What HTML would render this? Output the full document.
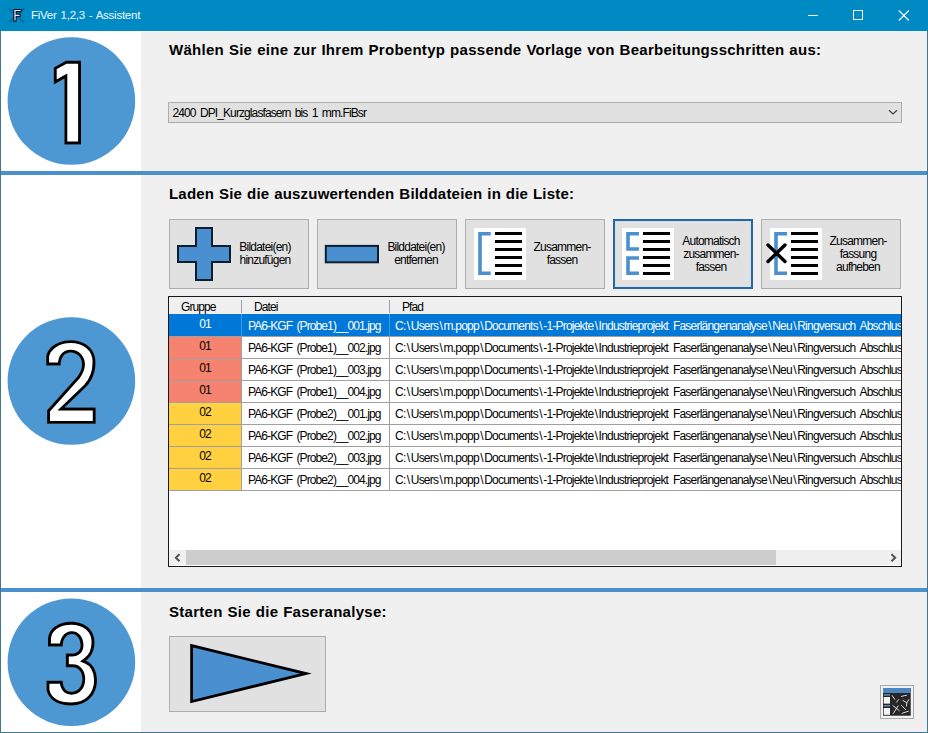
<!DOCTYPE html>
<html><head><meta charset="utf-8">
<style>
*{margin:0;padding:0;box-sizing:border-box}
html,body{width:928px;height:733px;overflow:hidden;background:#f0f0f0;font-family:"Liberation Sans",sans-serif;position:relative}
.a{position:absolute}
.t12{font-size:12px;line-height:13px;letter-spacing:-0.9px;word-spacing:1.9px;white-space:nowrap;color:#000}
.h15{font-size:15px;line-height:17px;font-weight:bold;letter-spacing:0.27px;word-spacing:0.5px;white-space:nowrap;color:#000}
.btn{position:absolute;top:219px;width:140px;height:70px;background:#e1e1e1;border:1px solid #adadad}
.lbl{position:absolute;text-align:center;font-size:12px;line-height:13px;letter-spacing:-0.78px;white-space:nowrap;color:#000}
.row{position:absolute;left:169px;width:732px;height:21px;background:#fff}
.gl{position:absolute;left:169px;width:732px;height:1px;background:#a0a0a0}
.c{position:absolute;top:0;font-size:12px;line-height:13px;letter-spacing:-0.9px;word-spacing:1.9px;white-space:nowrap;overflow:hidden}
.p{letter-spacing:-0.78px;word-spacing:2.18px}
.p i{font-style:normal;padding:0 1.39px}
</style></head><body>
<!-- title bar -->
<div class="a" style="left:0;top:0;width:928px;height:31px;background:#008ac4"></div>
<svg class="a" style="left:7px;top:6px" width="18" height="19" viewBox="0 0 18 19">
  <path d="M2 2.5 L17 16.5 M17 2.5 L2 16.5" stroke="#0a4a7a" stroke-opacity="0.45" stroke-width="2.2"/>
  <path d="M6.8 3.5 L14.3 3.5 L14.3 5.6 L9.2 5.6 L9.2 8.1 L13.1 8.1 L13.1 10.5 L9.2 10.5 L9.2 15.1 L6.8 15.1 Z" fill="#e6eef8" stroke="#0b1636" stroke-width="1.2"/>
</svg>
<div class="a" style="left:31px;top:9px;font-size:11.5px;line-height:13px;letter-spacing:-0.25px;word-spacing:1px;color:#eef8ff;white-space:nowrap">FiVer 1,2,3 - Assistent</div>
<div class="a" style="left:808px;top:15px;width:10px;height:1px;background:#fff"></div>
<div class="a" style="left:853px;top:10px;width:10px;height:10px;border:1px solid #fff"></div>
<svg class="a" style="left:898px;top:10px" width="12" height="11" viewBox="0 0 12 11"><path d="M0.8 0.5 L10.8 10.5 M10.8 0.5 L0.8 10.5" stroke="#fff" stroke-width="1.1"/></svg>

<!-- window borders -->
<div class="a" style="left:0;top:31px;width:1px;height:702px;background:#417890"></div>
<div class="a" style="left:927px;top:31px;width:1px;height:702px;background:#417890"></div>
<div class="a" style="left:0;top:732px;width:928px;height:1px;background:#417890"></div>

<!-- white left panels -->
<div class="a" style="left:1px;top:31px;width:140px;height:140px;background:#fff"></div>
<div class="a" style="left:1px;top:175px;width:140px;height:413px;background:#fff"></div>
<div class="a" style="left:1px;top:592px;width:140px;height:140px;background:#fff"></div>
<!-- separators -->
<div class="a" style="left:1px;top:171px;width:926px;height:4px;background:#4a90cc"></div>
<div class="a" style="left:1px;top:588px;width:926px;height:4px;background:#4a90cc"></div>

<!-- circles -->
<svg class="a" style="left:0;top:31px" width="141" height="701" viewBox="0 31 141 701">
  <defs><clipPath id="d1"><path d="M53.8 67.5 L66 60.8 L81 60.8 L81 144.4 L64.4 144.4 L64.4 78.5 L53.8 84.5 Z"/></clipPath><clipPath id="d2"><path d="M47.1 423.8 L95.7 423.8 L95.7 407.6 L64.6 407.6 L86.5 386.5 C92.5 380 95.5 372 95.5 362 C95.5 348 84 340.2 70.5 340.2 C58 340.2 48 347 46.2 356 L46.2 365.5 L60.7 365.5 C60.7 358 64 352.6 70.5 352.6 C77 352.6 82 357.5 82 364.5 C82 369 80 373 77 377 L47.1 410.2 Z"/></clipPath><clipPath id="d3"><path d="M48 646.5 L62.7 646.5 C62.7 639 66.5 634.1 71.7 634.1 C77 634.1 80.5 639 80.5 645.5 C80.5 650.5 77 653.6 72 653.6 L65.9 653.6 L65.9 667.2 L72.5 667.2 C78.5 667.2 82.3 672 82.3 679 C82.3 686.5 78 691.8 71.5 691.8 C65.5 691.8 62.7 687 62.7 680.8 L46.5 680.8 L46.5 690 C48.5 700 58 705.4 71.5 705.4 C87 705.4 97 695 97 680 C97 670 92 663 86 660.7 C91 657 94.5 651 94.5 642 C94.5 630 85 621.8 71.1 621.8 C58 621.8 49 629 48 638 Z"/></clipPath></defs>
  <circle cx="71.4" cy="101" r="63.8" fill="#4d97d2"/>
  <circle cx="71.4" cy="381" r="63.8" fill="#4d97d2"/>
  <circle cx="71.4" cy="662.2" r="63.8" fill="#4d97d2"/>
  <path d="M53.8 67.5 L66 60.8 L81 60.8 L81 144.4 L64.4 144.4 L64.4 78.5 L53.8 84.5 Z" fill="#fff" stroke="#000" stroke-width="5.8" clip-path="url(#d1)"/>
  <path d="M47.1 423.8 L95.7 423.8 L95.7 407.6 L64.6 407.6 L86.5 386.5 C92.5 380 95.5 372 95.5 362 C95.5 348 84 340.2 70.5 340.2 C58 340.2 48 347 46.2 356 L46.2 365.5 L60.7 365.5 C60.7 358 64 352.6 70.5 352.6 C77 352.6 82 357.5 82 364.5 C82 369 80 373 77 377 L47.1 410.2 Z" fill="#fff" stroke="#000" stroke-width="5.8" clip-path="url(#d2)"/>
  <path d="M48 646.5 L62.7 646.5 C62.7 639 66.5 634.1 71.7 634.1 C77 634.1 80.5 639 80.5 645.5 C80.5 650.5 77 653.6 72 653.6 L65.9 653.6 L65.9 667.2 L72.5 667.2 C78.5 667.2 82.3 672 82.3 679 C82.3 686.5 78 691.8 71.5 691.8 C65.5 691.8 62.7 687 62.7 680.8 L46.5 680.8 L46.5 690 C48.5 700 58 705.4 71.5 705.4 C87 705.4 97 695 97 680 C97 670 92 663 86 660.7 C91 657 94.5 651 94.5 642 C94.5 630 85 621.8 71.1 621.8 C58 621.8 49 629 48 638 Z" fill="#fff" stroke="#000" stroke-width="5.8" clip-path="url(#d3)"/>
</svg>

<!-- section 1 -->
<div class="a h15" style="left:169px;top:41px">Wählen Sie eine zur Ihrem Probentyp passende Vorlage von Bearbeitungsschritten aus:</div>
<div class="a" style="left:168px;top:102px;width:734px;height:21px;background:#e1e1e1;border:1px solid #adadad"></div>
<div class="a t12" style="left:172.5px;top:107px">2400 DPI_Kurzglasfasern bis 1 mm.FiBsr</div>
<svg class="a" style="left:887.5px;top:109px" width="10" height="7" viewBox="0 0 10 7"><path d="M1 1.2 L5 5 L9 1.2" stroke="#404040" stroke-width="1.2" fill="none"/></svg>

<!-- section 2 -->
<div class="a h15" style="left:169px;top:185px;letter-spacing:0.2px">Laden Sie die auszuwertenden Bilddateien in die Liste:</div>

<div class="btn" style="left:169px"></div>
<div class="btn" style="left:317px"></div>
<div class="btn" style="left:465px"></div>
<div class="btn" style="left:613px;border:2px solid #2a669a;box-shadow:inset 0 0 0 1px #c8e2f6"></div>
<div class="btn" style="left:761px"></div>
<svg class="a" style="left:0;top:200px" width="928" height="100" viewBox="0 200 928 100">
  <!-- plus -->
  <path d="M196 228 L212 228 L212 246 L230 246 L230 262 L212 262 L212 280 L196 280 L196 262 L178 262 L178 246 L196 246 Z" fill="#4a90d0" stroke="#0f1e2e" stroke-width="2"/>
  <!-- minus -->
  <rect x="325.8" y="245.9" width="52.2" height="16.4" fill="#4a90d0" stroke="#0f1e2e" stroke-width="2"/>
  <!-- icon 3 -->
  <rect x="474" y="228" width="52" height="52" fill="#fff"/>
  <path d="M490.7 233.8 L480 233.8 L480 273.2 L490.7 273.2" fill="none" stroke="#4a8fcf" stroke-width="3.6"/>
  <g fill="#000"><rect x="495" y="232" width="27" height="3"/><rect x="495" y="240" width="27" height="3"/><rect x="495" y="248" width="27" height="3"/><rect x="495" y="256" width="27" height="3"/><rect x="495" y="264" width="27" height="3"/><rect x="495" y="272" width="27" height="3"/></g>
  <!-- icon 4 -->
  <rect x="622" y="228" width="52" height="52" fill="#fff"/>
  <path d="M639 233.8 L628 233.8 L628 249 L639 249 M639 258 L628 258 L628 273.2 L639 273.2" fill="none" stroke="#4a8fcf" stroke-width="3.6"/>
  <g fill="#000"><rect x="643" y="232" width="27" height="3"/><rect x="643" y="240" width="27" height="3"/><rect x="643" y="248" width="27" height="3"/><rect x="643" y="256" width="27" height="3"/><rect x="643" y="264" width="27" height="3"/><rect x="643" y="272" width="27" height="3"/></g>
  <!-- icon 5 -->
  <rect x="770" y="228" width="52" height="52" fill="#fff"/>
  <path d="M787 233.8 L776 233.8 L776 273.2 L787 273.2" fill="none" stroke="#4a8fcf" stroke-width="3.6"/>
  <g fill="#000"><rect x="791" y="232" width="27" height="3"/><rect x="791" y="240" width="27" height="3"/><rect x="791" y="248" width="27" height="3"/><rect x="791" y="256" width="27" height="3"/><rect x="791" y="264" width="27" height="3"/><rect x="791" y="272" width="27" height="3"/></g>
  <path d="M768 245 L785 261.5 M785 245 L768 261.5" stroke="#000" stroke-width="3.4" stroke-linecap="round"/>
</svg>
<div class="lbl" style="left:215px;top:241px;width:100px">Bildatei(en)<br>hinzufügen</div>
<div class="lbl" style="left:366px;top:241px;width:100px">Bilddatei(en)<br>entfernen</div>
<div class="lbl" style="left:512px;top:241px;width:100px">Zusammen-<br>fassen</div>
<div class="lbl" style="left:661px;top:235px;width:100px">Automatisch<br>zusammen-<br>fassen</div>
<div class="lbl" style="left:808px;top:235px;width:100px">Zusammen-<br>fassung<br>aufheben</div>

<!-- table -->
<div class="a" style="left:168px;top:296px;width:734px;height:271px;background:#fff;border:1px solid #1a1a1a"></div>
<div class="a" style="left:169px;top:297px;width:732px;height:17px;background:#f0f0f0"></div>
<div class="a" style="left:241px;top:300px;width:1px;height:13px;background:#a0a0a0"></div>
<div class="a" style="left:389px;top:300px;width:1px;height:13px;background:#a0a0a0"></div>
<div class="a t12" style="left:181px;top:301px">Gruppe</div>
<div class="a t12" style="left:254px;top:301px">Datei</div>
<div class="a t12" style="left:402px;top:301px">Pfad</div>
<!--ROWS-->
<div class="row" style="top:314px;height:22px;background:#0078d7"><div class="a" style="left:0;top:0;width:72px;height:22px;background:#0078d7"></div><div class="c" style="left:0;width:72px;top:4px;text-align:center;color:#fff">01</div><div class="c" style="left:79px;width:140px;top:6px;color:#fff">PA6-KGF (Probe1)__001.jpg</div><div class="c p" style="left:226px;width:506px;top:6px;color:#fff;overflow:hidden">C:<i>\</i>Users<i>\</i>m.popp<i>\</i>Documents<i>\</i>-1-Projekte<i>\</i>Industrieprojekt Faserlängenanalyse<i>\</i>Neu<i>\</i>Ringversuch Abschluss<i>\</i>Bilder</div></div>
<div class="gl" style="top:336px"></div>
<div class="a" style="left:241px;top:314px;width:1px;height:22px;background:#3d9ae6"></div>
<div class="a" style="left:389px;top:314px;width:1px;height:22px;background:#3d9ae6"></div>
<div class="row" style="top:337px;height:21px;background:#fff"><div class="a" style="left:0;top:0;width:72px;height:21px;background:#f6836f"></div><div class="c" style="left:0;width:72px;top:3px;text-align:center;color:#000">01</div><div class="c" style="left:79px;width:140px;top:5px;color:#000">PA6-KGF (Probe1)__002.jpg</div><div class="c p" style="left:226px;width:506px;top:5px;color:#000;overflow:hidden">C:<i>\</i>Users<i>\</i>m.popp<i>\</i>Documents<i>\</i>-1-Projekte<i>\</i>Industrieprojekt Faserlängenanalyse<i>\</i>Neu<i>\</i>Ringversuch Abschluss<i>\</i>Bilder</div></div>
<div class="gl" style="top:358px"></div>
<div class="a" style="left:241px;top:337px;width:1px;height:21px;background:#a0a0a0"></div>
<div class="a" style="left:389px;top:337px;width:1px;height:21px;background:#a0a0a0"></div>
<div class="row" style="top:359px;height:21px;background:#fff"><div class="a" style="left:0;top:0;width:72px;height:21px;background:#f6836f"></div><div class="c" style="left:0;width:72px;top:3px;text-align:center;color:#000">01</div><div class="c" style="left:79px;width:140px;top:5px;color:#000">PA6-KGF (Probe1)__003.jpg</div><div class="c p" style="left:226px;width:506px;top:5px;color:#000;overflow:hidden">C:<i>\</i>Users<i>\</i>m.popp<i>\</i>Documents<i>\</i>-1-Projekte<i>\</i>Industrieprojekt Faserlängenanalyse<i>\</i>Neu<i>\</i>Ringversuch Abschluss<i>\</i>Bilder</div></div>
<div class="gl" style="top:380px"></div>
<div class="a" style="left:241px;top:359px;width:1px;height:21px;background:#a0a0a0"></div>
<div class="a" style="left:389px;top:359px;width:1px;height:21px;background:#a0a0a0"></div>
<div class="row" style="top:381px;height:21px;background:#fff"><div class="a" style="left:0;top:0;width:72px;height:21px;background:#f6836f"></div><div class="c" style="left:0;width:72px;top:3px;text-align:center;color:#000">01</div><div class="c" style="left:79px;width:140px;top:5px;color:#000">PA6-KGF (Probe1)__004.jpg</div><div class="c p" style="left:226px;width:506px;top:5px;color:#000;overflow:hidden">C:<i>\</i>Users<i>\</i>m.popp<i>\</i>Documents<i>\</i>-1-Projekte<i>\</i>Industrieprojekt Faserlängenanalyse<i>\</i>Neu<i>\</i>Ringversuch Abschluss<i>\</i>Bilder</div></div>
<div class="gl" style="top:402px"></div>
<div class="a" style="left:241px;top:381px;width:1px;height:21px;background:#a0a0a0"></div>
<div class="a" style="left:389px;top:381px;width:1px;height:21px;background:#a0a0a0"></div>
<div class="row" style="top:403px;height:21px;background:#fff"><div class="a" style="left:0;top:0;width:72px;height:21px;background:#ffd040"></div><div class="c" style="left:0;width:72px;top:3px;text-align:center;color:#000">02</div><div class="c" style="left:79px;width:140px;top:5px;color:#000">PA6-KGF (Probe2)__001.jpg</div><div class="c p" style="left:226px;width:506px;top:5px;color:#000;overflow:hidden">C:<i>\</i>Users<i>\</i>m.popp<i>\</i>Documents<i>\</i>-1-Projekte<i>\</i>Industrieprojekt Faserlängenanalyse<i>\</i>Neu<i>\</i>Ringversuch Abschluss<i>\</i>Bilder</div></div>
<div class="gl" style="top:424px"></div>
<div class="a" style="left:241px;top:403px;width:1px;height:21px;background:#a0a0a0"></div>
<div class="a" style="left:389px;top:403px;width:1px;height:21px;background:#a0a0a0"></div>
<div class="row" style="top:425px;height:21px;background:#fff"><div class="a" style="left:0;top:0;width:72px;height:21px;background:#ffd040"></div><div class="c" style="left:0;width:72px;top:3px;text-align:center;color:#000">02</div><div class="c" style="left:79px;width:140px;top:5px;color:#000">PA6-KGF (Probe2)__002.jpg</div><div class="c p" style="left:226px;width:506px;top:5px;color:#000;overflow:hidden">C:<i>\</i>Users<i>\</i>m.popp<i>\</i>Documents<i>\</i>-1-Projekte<i>\</i>Industrieprojekt Faserlängenanalyse<i>\</i>Neu<i>\</i>Ringversuch Abschluss<i>\</i>Bilder</div></div>
<div class="gl" style="top:446px"></div>
<div class="a" style="left:241px;top:425px;width:1px;height:21px;background:#a0a0a0"></div>
<div class="a" style="left:389px;top:425px;width:1px;height:21px;background:#a0a0a0"></div>
<div class="row" style="top:447px;height:21px;background:#fff"><div class="a" style="left:0;top:0;width:72px;height:21px;background:#ffd040"></div><div class="c" style="left:0;width:72px;top:3px;text-align:center;color:#000">02</div><div class="c" style="left:79px;width:140px;top:5px;color:#000">PA6-KGF (Probe2)__003.jpg</div><div class="c p" style="left:226px;width:506px;top:5px;color:#000;overflow:hidden">C:<i>\</i>Users<i>\</i>m.popp<i>\</i>Documents<i>\</i>-1-Projekte<i>\</i>Industrieprojekt Faserlängenanalyse<i>\</i>Neu<i>\</i>Ringversuch Abschluss<i>\</i>Bilder</div></div>
<div class="gl" style="top:468px"></div>
<div class="a" style="left:241px;top:447px;width:1px;height:21px;background:#a0a0a0"></div>
<div class="a" style="left:389px;top:447px;width:1px;height:21px;background:#a0a0a0"></div>
<div class="row" style="top:469px;height:21px;background:#fff"><div class="a" style="left:0;top:0;width:72px;height:21px;background:#ffd040"></div><div class="c" style="left:0;width:72px;top:3px;text-align:center;color:#000">02</div><div class="c" style="left:79px;width:140px;top:5px;color:#000">PA6-KGF (Probe2)__004.jpg</div><div class="c p" style="left:226px;width:506px;top:5px;color:#000;overflow:hidden">C:<i>\</i>Users<i>\</i>m.popp<i>\</i>Documents<i>\</i>-1-Projekte<i>\</i>Industrieprojekt Faserlängenanalyse<i>\</i>Neu<i>\</i>Ringversuch Abschluss<i>\</i>Bilder</div></div>
<div class="gl" style="top:490px"></div>
<div class="a" style="left:241px;top:469px;width:1px;height:21px;background:#a0a0a0"></div>
<div class="a" style="left:389px;top:469px;width:1px;height:21px;background:#a0a0a0"></div>
<!--/ROWS-->
<!-- scrollbar -->
<div class="a" style="left:169px;top:550px;width:732px;height:15px;background:#f0f0f0"></div>
<div class="a" style="left:186px;top:550px;width:590px;height:15px;background:#cdcdcd"></div>
<svg class="a" style="left:173px;top:553px" width="9" height="10" viewBox="0 0 9 10"><path d="M6.5 1.3 L2.8 4.8 L6.5 8.3" stroke="#505050" stroke-width="1.9" fill="none"/></svg>
<svg class="a" style="left:889px;top:553px" width="9" height="10" viewBox="0 0 9 10"><path d="M2.5 1.3 L6.2 4.8 L2.5 8.3" stroke="#505050" stroke-width="1.9" fill="none"/></svg>

<!-- section 3 -->
<div class="a h15" style="left:169px;top:603px">Starten Sie die Faseranalyse:</div>
<div class="a" style="left:169px;top:636px;width:157px;height:76px;background:#e1e1e1;border:1px solid #adadad"></div>
<svg class="a" style="left:160px;top:630px" width="170" height="90" viewBox="160 630 170 90">
  <path d="M191.6 645.6 L191.6 701.5 L306 673.6 Z" fill="#4a90d0" stroke="#000" stroke-width="2.8" stroke-linejoin="miter" stroke-miterlimit="20"/>
</svg>

<!-- bottom right icon -->
<div class="a" style="left:880px;top:685px;width:34px;height:34px;border:1px solid #a8a8a8;background:#f2f2f2"></div>
<svg class="a" style="left:883px;top:688px" width="28" height="28" viewBox="0 0 28 28">
  <rect x="0" y="0" width="27.7" height="27.7" fill="#262626"/>
  <rect x="0" y="0" width="27.7" height="5" fill="#4a86c0"/>
  <rect x="0.7" y="6.2" width="6.3" height="1.5" fill="#6a8ab0"/>
  <rect x="0.7" y="9" width="6.3" height="6.6" fill="#f4f4f4"/>
  <rect x="0.7" y="17" width="6.3" height="1.5" fill="#6a8ab0"/>
  <rect x="0.7" y="20" width="6.3" height="6.8" fill="#f4f4f4"/>
  <path d="M9 7.3 L11.9 11.6 M13.3 14.5 L15.9 11.3 M18.2 8.5 L21.7 7.6 L23.9 7.3 M19.6 12.2 L23.9 14.8 L26 11.3 M23.9 14.8 L23.4 18.5 M9.6 17.4 L16.5 22.8 M15.3 17.6 L10.2 25.7 M18.2 17.1 L22.8 21.7 M18.8 25.4 L25.7 23.1" stroke="#f0f0f0" stroke-width="0.9" fill="none"/>
</svg>
</body></html>
